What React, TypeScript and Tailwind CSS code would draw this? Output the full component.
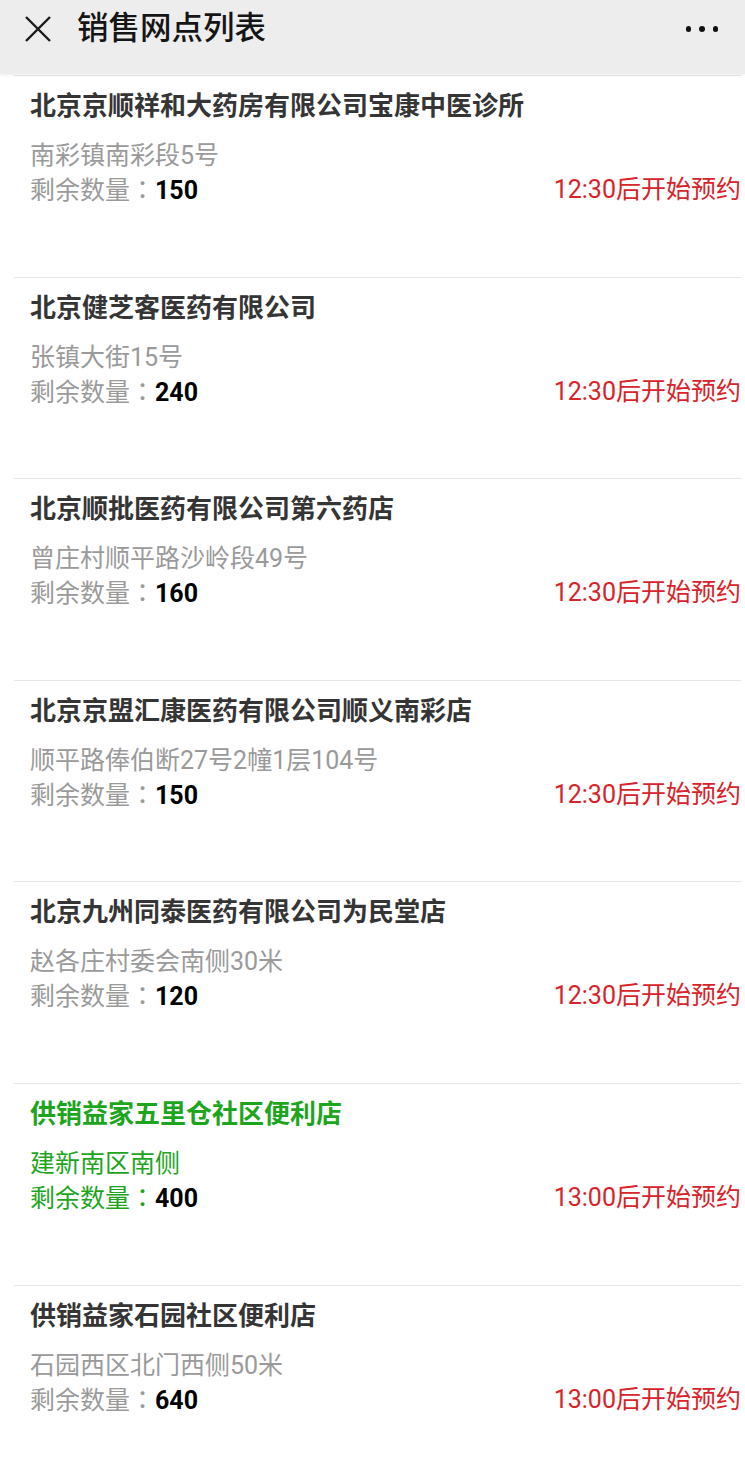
const FONT = { fontFamily: 'Roboto, "Noto Sans CJK SC", "Noto Sans", sans-serif' };

type Outlet = {
  name: string;
  address: string;
  left: number;
  time: string;
  highlight?: boolean;
};

const outlets: Outlet[] = [
  { name: "北京京顺祥和大药房有限公司宝康中医诊所", address: "南彩镇南彩段5号", left: 150, time: "12:30" },
  { name: "北京健芝客医药有限公司", address: "张镇大街15号", left: 240, time: "12:30" },
  { name: "北京顺批医药有限公司第六药店", address: "曾庄村顺平路沙岭段49号", left: 160, time: "12:30" },
  { name: "北京京盟汇康医药有限公司顺义南彩店", address: "顺平路俸伯断27号2幢1层104号", left: 150, time: "12:30" },
  { name: "北京九州同泰医药有限公司为民堂店", address: "赵各庄村委会南侧30米", left: 120, time: "12:30" },
  { name: "供销益家五里仓社区便利店", address: "建新南区南侧", left: 400, time: "13:00", highlight: true },
  { name: "供销益家石园社区便利店", address: "石园西区北门西侧50米", left: 640, time: "13:00" },
];

function OutletRow({ o }: { o: Outlet }) {
  // the tapped/selected row turns green, number stays black
  const tone = o.highlight ? "text-[#1ea51e]" : "text-[#9a9a9a]";
  return (
    <div className="ml-[14px] mr-[4px] h-[201.6px] border-t border-[#e6e6e6] pl-[16px] pt-[12px]">
      <div
        className={`text-[26px] leading-[36px] font-bold ${o.highlight ? "text-[#1ea51e]" : "text-[#353535]"}`}
      >
        {o.name}
      </div>
      <div className={`mt-[15px] text-[25px] leading-[33px] ${tone}`}>{o.address}</div>
      <div className="flex items-center justify-between text-[25px] leading-[33px]">
        <span className={tone}>
          剩余数量
          {/* TC face centres the full-width colon like the phone font does */}
          <span style={{ fontFamily: '"Noto Sans CJK TC", sans-serif' }}>：</span>
          <span className="font-bold text-black">{o.left}</span>
        </span>
        <span className="text-[#d8232a]">{o.time}后开始预约</span>
      </div>
    </div>
  );
}

export default function App() {
  return (
    <div className="min-h-[1481px] w-[745px] overflow-hidden bg-white" style={FONT}>
      <header className="relative z-10 flex h-[74px] items-start bg-[#ededed] pt-[11px] shadow-[0_1px_3px_rgba(0,0,0,0.08)]">
        <div className="flex h-[36px] w-full items-center">
          <svg className="ml-[24px] h-[28px] w-[28px]" viewBox="0 0 28 28" fill="none">
            <path d="M2 2L26 26M26 2L2 26" stroke="#1a1a1a" strokeWidth="2.4" />
          </svg>
          <h1 className="ml-[25px] text-[31.5px] leading-[36px] font-medium text-[#151515]">销售网点列表</h1>
          <div className="ml-auto mr-[27px] flex gap-[8px]">
            <span className="h-[5.5px] w-[5.5px] rounded-full bg-[#111]" />
            <span className="h-[5.5px] w-[5.5px] rounded-full bg-[#111]" />
            <span className="h-[5.5px] w-[5.5px] rounded-full bg-[#111]" />
          </div>
        </div>
      </header>
      <div className="pt-[1px]">
        {outlets.map((o) => (
          <OutletRow key={o.name} o={o} />
        ))}
      </div>
    </div>
  );
}
